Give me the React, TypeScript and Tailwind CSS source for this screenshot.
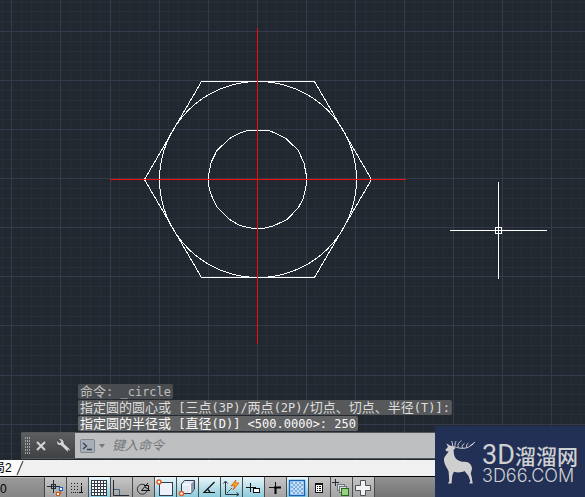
import React from "react";

const minor = Array.from({ length: 260 }, (_, i) => i - 4);
const gridX = (n: number) => Math.floor(11.95 + n * 9.808);
const gridY = (n: number) => Math.floor(31.6 + n * 9.812);

const INNER =
  "355,211 415,211 440,221 467,235 505,271 522,310 529,345 529,375 520,415 505,443 472,478 432,497 402,505 367,505 330,497 298,478 260,440 243,403 236,378 236,345 243,308 261,271 300,235 325,221";

function Drawing() {
  return (
    <svg className="absolute inset-0 h-full w-full" shapeRendering="crispEdges" aria-hidden="true">
      {minor.filter((n) => n % 5 !== 0).map((n) => (
        <g key={n} fill="#272e39">
          <rect x={gridX(n)} y="0" width="1" height="100%" />
          <rect x="0" y={gridY(n)} width="100%" height="1" />
        </g>
      ))}
      {minor.filter((n) => n % 5 === 0).map((n) => (
        <g key={n} fill="#343a4b">
          <rect x={gridX(n)} y="0" width="1" height="100%" />
          <rect x="0" y={gridY(n)} width="100%" height="1" />
        </g>
      ))}
      <g fill="none" stroke="#fff" strokeWidth="1">
        <polygon points="201.5,81.5 314.5,81.5 371.5,179.5 314.5,277.5 201.5,277.5 144.5,179.5" />
        <ellipse cx="258" cy="179.5" rx="98.5" ry="98" />
        <g transform="translate(130 60) scale(0.33333)">
          <polygon points={INNER} vectorEffect="non-scaling-stroke" />
        </g>
      </g>
      <g fill="#f20d0d">
        <rect x="110" y="179" width="296" height="1" />
        <rect x="257" y="28" width="1" height="316" />
      </g>
      <g fill="#fff">
        <rect x="450" y="230" width="97" height="1" />
        <rect x="498" y="182" width="1" height="97" />
      </g>
      <rect x="495.5" y="227.5" width="6" height="6" fill="none" stroke="#fff" />
    </svg>
  );
}

function Zh({ children }: { children: string }) {
  return <span className="text-[13px]">{children}</span>;
}

function HistoryLine({ tone, children }: { tone: string; children: React.ReactNode }) {
  return (
    <p className={`h-[15px] rounded-[2px] px-[2px] text-[12px] leading-[15px] whitespace-pre ${tone}`}>{children}</p>
  );
}

type Tool = { label: string; on?: boolean; icon: React.ReactNode };

const dots = [4, 7, 10];
const cells = [0, 1, 2, 3, 4, 5];

const tools: Tool[] = [
  {
    label: "推断约束",
    icon: (
      <>
        <path d="M2 8.5H15M8.5 2V15" stroke="#222b35" />
        <rect x="6.500" y="6.500" width="4" height="4" fill="none" stroke="#222b35" />
        <path d="M12 15.500H15.500V11" stroke="#d2581c" fill="none" strokeWidth="1.500" />
        <rect x="14.500" y="9.500" width="3" height="3" fill="#fff" stroke="#1763c4" />
        <rect x="11.500" y="14.500" width="3" height="3" fill="#fff" stroke="#d2581c" />
      </>
    ),
  },
  {
    label: "捕捉模式",
    icon: (
      <>
        {dots.map((x) => dots.map((y) => <rect key={`${x}-${y}`} x={x} y={y + 1} width="1" height="1" fill="#222" />))}
        <path d="M4 14.500H11" stroke="#222" strokeDasharray="1 1" />
        <path d="M14.500 5V7M14.500 8V14" stroke="#111" strokeWidth="1" />
        <path d="M12 14.500H16" stroke="#111" />
      </>
    ),
  },
  {
    label: "栅格显示",
    on: true,
    icon: (
      <>
        <rect x="2" y="2" width="16" height="16" fill="#333c46" />
        {cells.slice(0, 5).map((c) =>
          cells.slice(0, 5).map((r) => <rect key={`${c}-${r}`} x={3 + c * 3} y={3 + r * 3} width="2" height="2" fill="#fff" />)
        )}
      </>
    ),
  },
  {
    label: "正交模式",
    icon: (
      <>
        <path d="M2.500 11.500H8.500V17" fill="none" stroke="#41617f" />
        <path d="M2.500 2V17.500H18" fill="none" stroke="#222b35" />
      </>
    ),
  },
  {
    label: "极轴追踪",
    icon: (
      <>
        <path d="M12 7A5 5 0 1 0 14 13" fill="none" stroke="#333" />
        <path d="M17 12.500H8.500L15 5M11 7.500H15.500V12M12 9L15 11" fill="none" stroke="#111" />
      </>
    ),
  },
  {
    label: "对象捕捉",
    on: true,
    icon: (
      <>
        <rect x="4.500" y="4.500" width="13" height="13" fill="#edf2fa" stroke="#333c50" />
        <circle cx="4" cy="4" r="2" fill="#fff" stroke="#e3581a" strokeWidth="1.400" />
      </>
    ),
  },
  {
    label: "三维对象捕捉",
    on: true,
    icon: (
      <>
        <path d="M4.500 6L7.500 2.500H17.500V11L14 15.500H4.500Z" fill="#e4eaf5" stroke="#333c50" />
        <path d="M13 7L17 3V11L14 15Z" fill="#8d98ad" />
        <path d="M5 6.500H13.500V15" fill="none" stroke="#fff" />
        <circle cx="4.500" cy="15.500" r="2" fill="#fff" stroke="#e3581a" strokeWidth="1.400" />
      </>
    ),
  },
  {
    label: "对象捕捉追踪",
    on: true,
    icon: <path d="M15.500 4L5 14.500H16M8.500 11L11 14" fill="none" stroke="#111" strokeWidth="1.200" />,
  },
  {
    label: "动态 UCS",
    on: true,
    icon: (
      <>
        <path d="M4.500 4V16.500H17M2.500 5.500L4.500 3L6.500 5.500M15.500 14.500L18 16.500L15.500 18" fill="none" stroke="#2b3540" />
        <path d="M6 15L11 10" stroke="#2b3540" strokeDasharray="2 1" />
        <path d="M10 8L15 2L14 5L18 5L12 12L14 7Z" fill="#ffb020" stroke="#dd6a13" />
      </>
    ),
  },
  {
    label: "动态输入",
    on: true,
    icon: (
      <>
        <path d="M3 9.500H13M7.500 5V14" stroke="#111" />
        <rect x="10.500" y="10.500" width="6" height="4" fill="#fff" stroke="#111" />
      </>
    ),
  },
  {
    label: "显示线宽",
    icon: (
      <>
        <path d="M4 9.500H10M10.500 4V10" stroke="#111" />
        <path d="M9 9.500H16M10.500 9V16" stroke="#000" strokeWidth="2" />
      </>
    ),
  },
  {
    label: "显示透明度",
    on: true,
    icon: (
      <>
        <rect x="2.500" y="2.500" width="15" height="15" fill="#c8e1f5" stroke="#1763b9" strokeWidth="1.400" />
        {cells.map((c) =>
          cells
            .filter((r) => (r + c) % 2 === 0)
            .map((r) => <rect key={`${c}-${r}`} x={4 + c * 2} y={4 + r * 2} width="2" height="2" fill="#79afe0" />)
        )}
      </>
    ),
  },
  {
    label: "快捷特性",
    icon: (
      <>
        <rect x="6.500" y="5.500" width="7" height="9" fill="#fff" stroke="#111" />
        <path d="M6 6H14" stroke="#111" strokeWidth="2" />
        <path d="M8 8.500H9M10 8.500H12M8 10.500H9M10 10.500H12M8 12.500H9M10 12.500H12" stroke="#111" />
      </>
    ),
  },
  {
    label: "选择循环",
    icon: (
      <>
        <path d="M1 4.500H8M4.500 1V8" stroke="#222b35" />
        <rect x="6.500" y="6.500" width="7" height="6" fill="#dfe3e6" stroke="#6b747c" />
        <rect x="8.500" y="8.500" width="7" height="6" fill="#dfe3e6" stroke="#6b747c" />
        <rect x="10.500" y="10.500" width="7" height="7" fill="#9bcf84" stroke="#1f6b1b" />
      </>
    ),
  },
  {
    label: "注释监视器",
    icon: <path d="M7.500 2.500H12.500V7.500H17.500V12.500H12.500V17.500H7.500V12.500H2.500V7.500H7.500Z" fill="#f2f2f2" stroke="#4a525b" />,
  },
];

function Deer() {
  return (
    <svg viewBox="175 208 100 137" className="h-[46px] w-[33px] shrink-0" aria-hidden="true">
      <path
        d="M182 239L190 231L185 220L197 227L206 228L213 234L207 240L208 251C210 268 222 276 240 276C255 276 263 286 263 298L259 311L262 322L265 342H254L258 335L252 318L240 304C228 310 218 309 208 306L203 318L201 342H190L194 334L192 305C186 292 177 282 178 266C180 258 188 252 192 244L185 244Z"
        fill="#cfcfcf"
      />
      <path
        d="M203 230C206 224 202 220 202 213M208 230C216 226 208 219 215 213M210 230C225 237 247 237 257 228L272 216M222 233C218 223 222 218 231 212M234 234C231 227 236 223 240 220M247 232C245 225 248 222 252 219M256 228L267 222"
        fill="none"
        stroke="#cfcfcf"
        strokeWidth="3"
      />
    </svg>
  );
}

export default function App() {
  return (
    <div className="relative flex min-h-screen flex-col overflow-hidden bg-[#212830] font-['Liberation_Sans','Noto_Sans_CJK_SC',sans-serif]">
      <main className="relative flex flex-1 flex-col justify-end">
        <Drawing />
        <div className="relative mb-px ml-[78px] flex flex-col items-start gap-px font-['DejaVu_Sans_Mono','Noto_Sans_CJK_SC',monospace]">
          <HistoryLine tone="bg-[#4a4d50] text-[#bdbdbd]">
            <Zh>命令</Zh>: _circle
          </HistoryLine>
          <HistoryLine tone="bg-[#56585a] text-[#dedede]">
            <Zh>指定圆的圆心或</Zh> [<Zh>三点</Zh>(3P)/<Zh>两点</Zh>(2P)/<Zh>切点、切点、半径</Zh>(T)]:
          </HistoryLine>
          <HistoryLine tone="bg-[#636465] text-[#fafafa]">
            <Zh>指定圆的半径或</Zh> [<Zh>直径</Zh>(D)] &lt;500.0000&gt;: 250
          </HistoryLine>
        </div>
        <div className="relative mb-px ml-[21px] flex h-[27px] rounded-l-[2px] border-y border-[#55585b] bg-[#bebfc0]">
          <div className="flex w-[54px] shrink-0 items-center bg-linear-to-b from-[#5c5e60] to-[#3f4143] pl-[4px]">
            <svg width="6" height="18" fill="#a5a5a5" aria-hidden="true">
              {[0, 3, 6, 9, 12, 15].map((y) => (
                <g key={y}>
                  <rect x="0" y={y} width="1" height="2" />
                  <rect x="2" y={y} width="1" height="2" />
                  <rect x="4" y={y} width="1" height="2" />
                </g>
              ))}
            </svg>
            <button type="button" aria-label="关闭" className="ml-[4px] p-px">
              <svg width="10" height="10" aria-hidden="true">
                <path d="M1 1L9 9M9 1L1 9" stroke="#d6d6d6" strokeWidth="2" />
              </svg>
            </button>
            <button type="button" aria-label="自定义" className="ml-[9px]">
              <svg width="15" height="15" viewBox="0 0 15 15" aria-hidden="true">
                <path
                  d="M2 .8L5 3.500L3.700 5L.8 2.500C0 5 1.500 8 5 7.500L11.500 14L14.200 12.500L14 11L8 5.500C8.500 2.500 5.500-.2 2 .8Z"
                  fill="#d5d5d5"
                  stroke="#292929"
                  strokeWidth="0.600"
                />
                <circle cx="12.300" cy="12.200" r="0.800" fill="#444" />
              </svg>
            </button>
          </div>
          <button type="button" aria-label="最近使用的命令" className="ml-[5px] flex items-center gap-[4px]">
            <svg width="15" height="14" aria-hidden="true">
              <rect x="0.500" y="0.500" width="14" height="13" rx="1" fill="#a8afb9" stroke="#7f8791" />
              <path d="M3 4L6.500 7L3 10M7 10.500H12" fill="none" stroke="#364353" strokeWidth="1.300" />
            </svg>
            <svg width="6" height="4" aria-hidden="true">
              <path d="M0 0H6L3 4Z" fill="#777" />
            </svg>
          </button>
          <input
            aria-label="键入命令"
            placeholder="键入命令"
            className="ml-[7px] min-w-0 flex-1 bg-transparent text-[13px] text-[#333] italic outline-none placeholder:text-[#74777b]"
          />
        </div>
      </main>

      <nav className="flex h-[17px] items-center border-b border-black bg-[#f0f0f0] text-[12px] leading-[16px] text-black">
        <button type="button" className="-ml-[7px] flex h-full items-center bg-[#fbfbfb]">
          局2
        </button>
        <svg width="12" height="16" aria-hidden="true">
          <path d="M0 0H11L5 15H0Z" fill="#fbfbfb" />
          <path d="M11 1L5 15" stroke="#555" strokeWidth="1.300" />
        </svg>
      </nav>

      <footer className="flex h-[20px] bg-linear-to-b from-[#929292] to-[#747474]">
        <div className="w-[45px] shrink-0 border-t border-r border-t-[#b5b5b5] border-r-[#444] bg-linear-to-b from-[#999] to-[#858585] text-[12px] leading-[22px] text-black">
          0
        </div>
        {tools.map((t) => (
          <button
            key={t.label}
            type="button"
            title={t.label}
            aria-pressed={!!t.on}
            className={`w-[22px] shrink-0 border-r border-[#4b4b4b] bg-linear-to-b ${
              t.on ? "from-[#e8f5f9] to-[#8bcbdc]" : "from-[#c6c6c6] to-[#a3a3a3]"
            }`}
          >
            <svg width="21" height="19" className="block" aria-hidden="true">
              {t.icon}
            </svg>
          </button>
        ))}
      </footer>

      <aside className="absolute right-0 bottom-0 flex h-[71px] w-[150px] items-center bg-[#223056] pl-[8px] text-[#cfd0d2]">
        <Deer />
        <div className="ml-[6px] flex flex-col pt-[4px] whitespace-nowrap">
          <div className="flex h-[24px] items-center">
            <span className="font-['Roboto',sans-serif] text-[27px] leading-[24px]">3D</span>
            <span className="font-['Noto_Sans_CJK_SC',sans-serif] text-[21px] leading-[24px] font-medium">溜溜网</span>
          </div>
          <span className="font-['Inter',sans-serif] text-[18px] leading-[18px] font-light">3D66.COM</span>
        </div>
      </aside>
    </div>
  );
}
